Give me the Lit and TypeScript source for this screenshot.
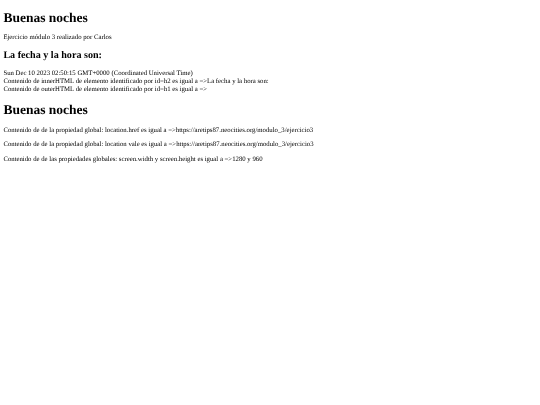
import { LitElement, html, css } from "lit";
import { customElement } from "lit/decorators.js";

@customElement("app-root")
export class AppRoot extends LitElement {
  static styles = css`
    :host {
      display: block;
      padding: 0.6px 3.375px 0;
      background: #fff;
      color: #000;
      font-family: "Liberation Serif", "Times New Roman", serif;
      font-size: 6.75px;
      line-height: 7.594px;
      min-height: 405px;
      box-sizing: border-box;
      overflow: hidden;
      text-rendering: geometricPrecision;
      filter: blur(0.15px);
    }
    h1, h2 { font-weight: bold; }
    h1 {
      font-size: 13.5px;
      line-height: 15.6px;
      margin: 9.05px 0;
    }
    h2 {
      font-size: 10.125px;
      line-height: 11.8px;
      margin: 8.4px 0;
    }
    p { margin: 6.75px 0; font-weight: normal; }
  `;

  render() {
    return html`
      <h1>Buenas noches</h1>
      <p>Ejercicio módulo 3 realizado por Carlos</p>
      <h2>La fecha y la hora son:</h2>
      <div>Sun Dec 10 2023 02:50:15 GMT+0000 (Coordinated Universal Time)</div>
      <div>Contenido de innerHTML de elemento identificado por id=h2 es igual a =&gt;La fecha y la hora son:</div>
      <div>Contenido de outerHTML de elemento identificado por id=h1 es igual a =&gt;</div>
      <h1>Buenas noches</h1>
      <p>Contenido de de la propiedad global: location.href es igual a =&gt;https://aretips87.neocities.org/modulo_3/ejercicio3</p>
      <p>Contenido de de la propiedad global: location vale es igual a =&gt;https://aretips87.neocities.org/modulo_3/ejercicio3</p>
      <p>Contenido de de las propiedades globales: screen.width y screen.height es igual a =&gt;1280 y 960</p>
    `;
  }
}
